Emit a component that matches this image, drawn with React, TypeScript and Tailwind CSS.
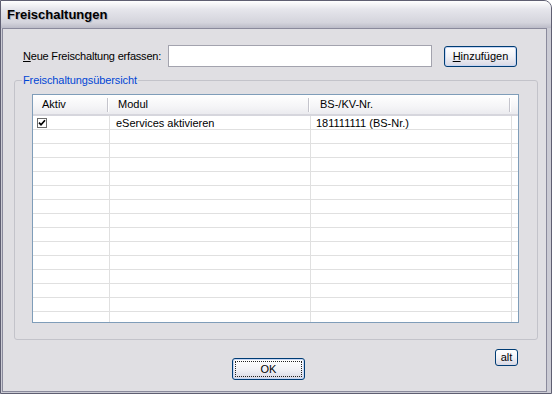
const rowCount = 15

const rows = [
  { active: true, modul: "eServices aktivieren", nr: "181111111 (BS-Nr.)" },
]

export default function App() {
  return (
    <div className="flex h-[394px] w-[552px] flex-col overflow-hidden rounded-tr-[8px] border border-[#5f5f72] bg-[#cbcbd4] font-['Liberation_Sans',Arial,sans-serif] text-[11px] text-black">
      {/* title bar */}
      <div className="flex h-[27px] shrink-0 items-center bg-[linear-gradient(to_bottom,#ffffff,#e6e6ec_30%,#d4d4dc_80%,#bcbcc8)] pl-[6px] text-[13px] font-bold [text-shadow:1px_1px_0_#b4b4be]">
        Freischaltungen
      </div>

      <div className="flex min-h-0 flex-1 pb-[1px] pl-[1px] pr-[4px]">
        <div className="flex flex-1 flex-col border border-[#8a8a9c] bg-[#e0dfe3] pl-[11px] pt-[16px]">
          {/* new entry row */}
          <div className="flex h-[22px] items-center">
            <label className="ml-[9px] w-[145px] tracking-[-0.2px]">
              <span className="underline">N</span>eue Freischaltung erfassen:
            </label>
            <input className="h-[22px] w-[264px] border border-[#a3a3ae] bg-white px-1 outline-none" />
            <XpButton className="ml-[12px] h-[21px] w-[73px]" highlight>
              <span className="underline">H</span>inzufügen
            </XpButton>
          </div>

          {/* group box */}
          <fieldset className="mt-[7px] w-[524px] rounded-[3px] border border-[#c3c3ca] pb-[16px]">
            <legend className="ml-[7px] px-[1px] leading-[13px] tracking-[-0.1px] text-[#0046d5]">
              Freischaltungsübersicht
            </legend>

            <div className="ml-[17px] mt-[7px] h-[229px] w-[487px] overflow-hidden border border-[#7f9db9] bg-white">
              <div className="flex h-[21px] border-b-[2px] border-[#d6d6dd] bg-[linear-gradient(to_bottom,#ffffff,#f5f5f7_60%,#ebebef)]">
                <HeaderCell width="w-[77px]" pad="pl-[9px]" label="Aktiv" />
                <HeaderCell width="w-[201px]" pad="pl-[8px]" label="Modul" />
                <HeaderCell width="w-[201px]" pad="pl-[9px]" label="BS-/KV-Nr." />
                <div className="flex-1" />
              </div>

              {Array.from({ length: rowCount }).map((_, i) => {
                const row = rows[i]
                return (
                  <div key={i} className="flex h-[14px] border-b border-[#e0e0e0] leading-[13px]">
                    <div className="flex w-[77px] items-center border-r border-[#e0e0e0] pl-[4px]">
                      {row?.active && <CheckBox />}
                    </div>
                    <div className="w-[201px] border-r border-[#e0e0e0] pl-[6px] pt-[1px]">
                      {row?.modul}
                    </div>
                    <div className="w-[201px] border-r border-[#e0e0e0] pl-[5px] pt-[1px]">
                      {row?.nr}
                    </div>
                    <div className="flex-1" />
                  </div>
                )
              })}
            </div>
          </fieldset>

          {/* bottom buttons */}
          <div className="flex items-start">
            <XpButton className="ml-[218px] mt-[18px] h-[22px] w-[73px] p-[2px]" highlight>
              <span className="flex h-full w-full items-center justify-center border border-dotted border-[#222]">
                OK
              </span>
            </XpButton>
            <XpButton className="ml-[190px] mt-[9px] h-[17px] w-[23px]">
              alt
            </XpButton>
          </div>
        </div>
      </div>
    </div>
  )
}

function HeaderCell({
  width,
  pad,
  label,
}: {
  width: string
  pad: string
  label: string
}) {
  return (
    <div className={`flex ${width} items-center justify-between ${pad}`}>
      <span>{label}</span>
      <span className="mr-[1px] flex h-[14px]">
        <span className="w-[1px] bg-[#c4c4cc]" />
        <span className="w-[1px] bg-white" />
      </span>
    </div>
  )
}

function CheckBox() {
  return (
    <span className="flex h-[10px] w-[10px] items-center justify-center border border-[#6b6b6b] bg-white">
      <svg width="8" height="8" viewBox="0 0 8 8">
        <path d="M1 3.6 L3 5.8 L7 1.2" fill="none" stroke="#000" strokeWidth="1.7" />
      </svg>
    </span>
  )
}

function XpButton({
  className,
  highlight = false,
  children,
}: {
  className: string
  highlight?: boolean
  children: React.ReactNode
}) {
  return (
    <button
      type="button"
      className={`flex items-center justify-center rounded-[3px] border border-[#003c74] bg-[linear-gradient(to_bottom,#ffffff,#f2f2f6_50%,#d8d8e4)] leading-none ${
        highlight ? "shadow-[inset_0_0_0_1px_#c6d6f4]" : ""
      } ${className}`}
    >
      {children}
    </button>
  )
}
